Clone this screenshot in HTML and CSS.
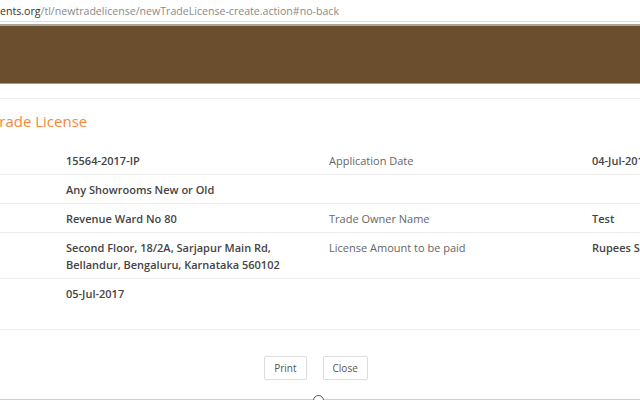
FILE: index.html
```html
<!DOCTYPE html>
<html lang="en">
<head>
<meta charset="utf-8">
<title>Trade License</title>
<link rel="stylesheet" href="styles.css">
</head>
<body>
<div class="urlbar"><span class="host">ents.org</span><span class="path">/tl/newtradelicense/newTradeLicense-create.action#no-back</span></div>
<header class="banner"></header>
<main class="page">
  <h2 class="title">Trade License</h2>
  <table class="details">
    <colgroup><col><col><col><col></colgroup>
    <tbody>
      <tr><td></td><td class="val">15564-2017-IP</td><td class="lbl">Application Date</td><td class="val">04-Jul-2017</td></tr>
      <tr><td></td><td class="val">Any Showrooms New or Old</td><td></td><td></td></tr>
      <tr><td></td><td class="val">Revenue Ward No 80</td><td class="lbl">Trade Owner Name</td><td class="val">Test</td></tr>
      <tr><td></td><td class="val">Second Floor, 18/2A, Sarjapur Main Rd,<br>Bellandur, Bengaluru, Karnataka 560102</td><td class="lbl">License Amount to be paid</td><td class="val">Rupees Seven Hundred</td></tr>
      <tr class="last"><td></td><td class="val">05-Jul-2017</td><td></td><td></td></tr>
    </tbody>
  </table>
  <div class="actions">
    <button class="btn" type="button">Print</button>
    <button class="btn" type="button">Close</button>
  </div>
  <footer class="bottom">
    <span class="scroll-top"></span>
  </footer>
</main>
</body>
</html>
```

FILE: styles.css
```css
html, body {
  margin: 0;
  padding: 0;
  background: #fff;
  overflow: hidden;
  width: 640px;
  height: 400px;
}
body {
  font-family: "Open Sans", "Noto Sans", sans-serif;
  color: #333;
}
.urlbar {
  height: 22px;
  line-height: 22px;
  font-size: 10.6px;
  white-space: nowrap;
  border-bottom: 1px solid #dcdcdc;
  box-sizing: border-box;
  background: #fff;
}
.urlbar .host { color: #333; }
.urlbar .path { color: #8a8a8a; }
.banner {
  height: 60px;
  background: #6a4e2d;
  border-top: 2px solid #a8a39c;
  border-bottom: 1px solid #a89a88;
  box-sizing: border-box;
  margin-top: 2px;
}
.page {
  border-top: 1px solid #f1ecec;
  margin-top: 14px;
  position: relative;
  height: 302px;
}
.title {
  margin: 12px 0 0 -9px;
  font-size: 15px;
  font-weight: 400;
  color: #f7873a;
  line-height: 20px;
  white-space: nowrap;
}
.details {
  margin: 15px 0 0 -205px;
  width: 1052px;
  table-layout: fixed;
  border-collapse: collapse;
  font-size: 11px;
}
.details col { width: 263px; }
.details td {
  padding: 6px 8px 5px;
  line-height: 17px;
  vertical-align: top;
  white-space: nowrap;
  border-bottom: 1px solid #ececec;
}
.details tr.last td { border-bottom: none; }
.details td.val { font-weight: 600; color: #444; }
.details td.lbl { color: #666; }
.actions {
  border-top: 1px solid #f0eaea;
  margin-top: 22px;
  padding-top: 26px;
  display: flex;
  justify-content: center;
  gap: 16px;
  padding-right: 8px;
}
.btn {
  font-family: "Open Sans", "Noto Sans", sans-serif;
  font-size: 10px;
  color: #555;
  background: #fff;
  border: 1px solid #ddd;
  border-radius: 2px;
  height: 24px;
  padding: 0 9px;
}
.bottom {
  position: absolute;
  left: 0;
  right: 0;
  top: 300px;
  border-top: 1px solid #cfcfcf;
}
.scroll-top {
  position: absolute;
  left: 313px;
  top: -5px;
  width: 9px;
  height: 9px;
  border: 1.5px solid #555;
  border-radius: 50%;
  background: #fff;
}
```
